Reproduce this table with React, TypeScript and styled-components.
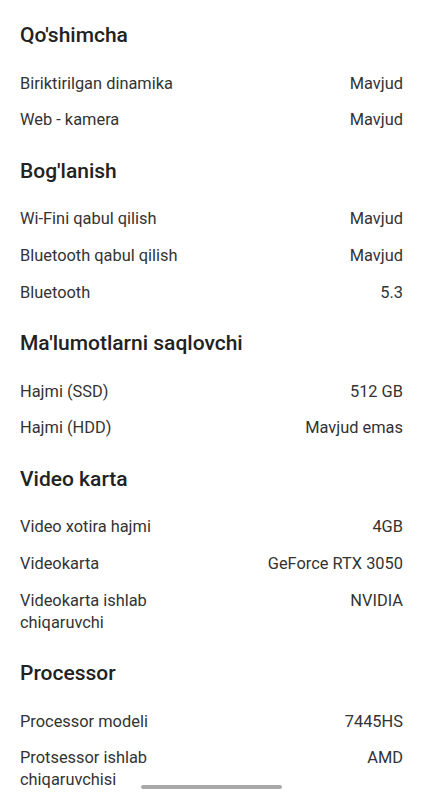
import styled, { createGlobalStyle } from "styled-components"

interface Spec {
  label: string
  value: string
}

interface Section {
  title: string
  specs: Spec[]
}

const GlobalStyle = createGlobalStyle`
  body {
    margin: 0;
    background: #ffffff;
    font-family: Roboto, "Noto Sans", Arial, sans-serif;
    -webkit-font-smoothing: antialiased;
  }
`

const Page = styled.div`
  padding: 21px 20px 0;
  height: 800px;
  overflow: hidden;
  box-sizing: border-box;
`

const Group = styled.section`
  margin-bottom: 18px;
`

const Title = styled.h2`
  margin: 0 0 16.5px;
  font-size: 21px;
  line-height: 28px;
  font-weight: 500;
  color: #222222;
`

const Row = styled.div`
  display: grid;
  grid-template-columns: 1fr 1fr;
  column-gap: 16px;
  padding: 7.3px 0;
  font-size: 16.4px;
  line-height: 22px;
  color: #333333;
`

const Value = styled.span`
  text-align: right;
`

const HomeBar = styled.div`
  position: fixed;
  left: 141px;
  top: 785px;
  width: 141px;
  height: 4px;
  border-radius: 2px;
  background: #a9a9a9;
`

const data: Section[] = [
  {
    title: "Qo'shimcha",
    specs: [
      { label: "Biriktirilgan dinamika", value: "Mavjud" },
      { label: "Web - kamera", value: "Mavjud" },
    ],
  },
  {
    title: "Bog'lanish",
    specs: [
      { label: "Wi-Fini qabul qilish", value: "Mavjud" },
      { label: "Bluetooth qabul qilish", value: "Mavjud" },
      { label: "Bluetooth", value: "5.3" },
    ],
  },
  {
    title: "Ma'lumotlarni saqlovchi",
    specs: [
      { label: "Hajmi (SSD)", value: "512 GB" },
      { label: "Hajmi (HDD)", value: "Mavjud emas" },
    ],
  },
  {
    title: "Video karta",
    specs: [
      { label: "Video xotira hajmi", value: "4GB" },
      { label: "Videokarta", value: "GeForce RTX 3050" },
      { label: "Videokarta ishlab chiqaruvchi", value: "NVIDIA" },
    ],
  },
  {
    title: "Processor",
    specs: [
      { label: "Processor modeli", value: "7445HS" },
      { label: "Protsessor ishlab chiqaruvchisi", value: "AMD" },
    ],
  },
]

const App = () => (
  <>
    <GlobalStyle />
    <Page>
      {data.map((section) => (
        <Group key={section.title}>
          <Title>{section.title}</Title>
          {section.specs.map((spec) => (
            <Row key={spec.label}>
              <span>{spec.label}</span>
              <Value>{spec.value}</Value>
            </Row>
          ))}
        </Group>
      ))}
    </Page>
    <HomeBar />
  </>
)

export default App
